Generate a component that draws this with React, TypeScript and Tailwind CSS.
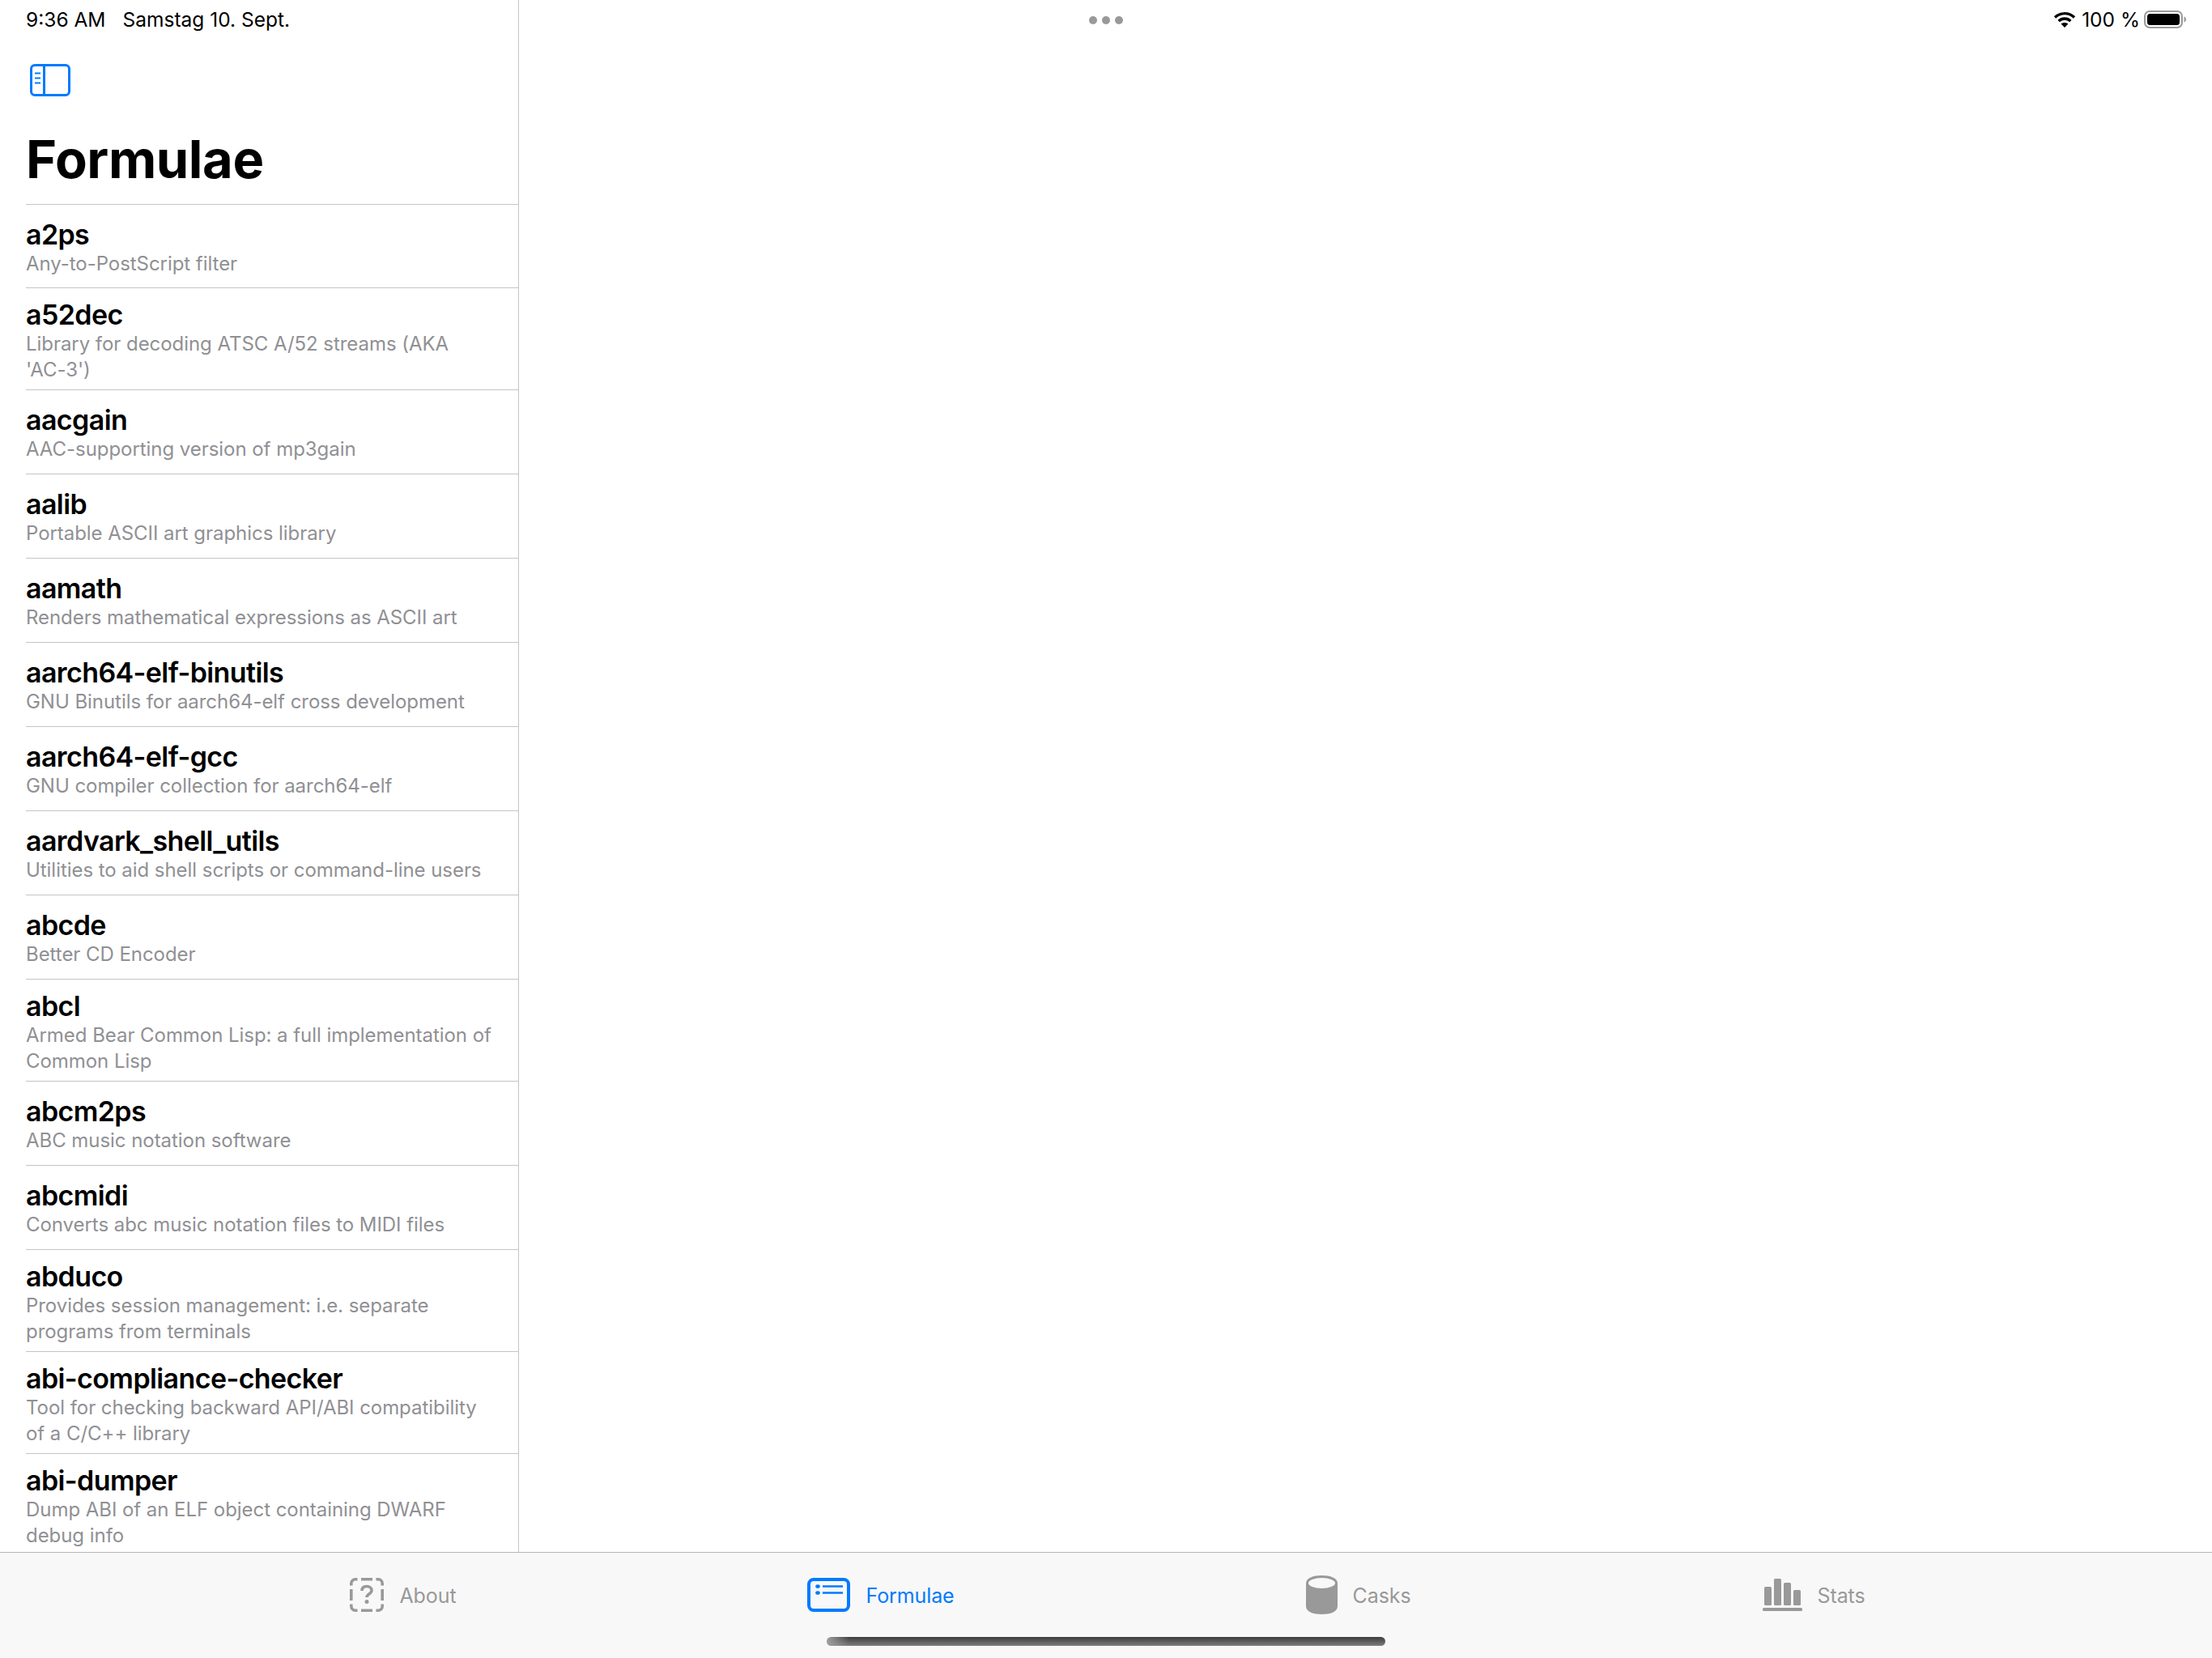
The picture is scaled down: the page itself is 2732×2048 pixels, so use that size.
const formulae = [
  { name: "a2ps", desc: ["Any-to-PostScript filter"] },
  { name: "a52dec", desc: ["Library for decoding ATSC A/52 streams (AKA", "'AC-3')"] },
  { name: "aacgain", desc: ["AAC-supporting version of mp3gain"] },
  { name: "aalib", desc: ["Portable ASCII art graphics library"] },
  { name: "aamath", desc: ["Renders mathematical expressions as ASCII art"] },
  { name: "aarch64-elf-binutils", desc: ["GNU Binutils for aarch64-elf cross development"] },
  { name: "aarch64-elf-gcc", desc: ["GNU compiler collection for aarch64-elf"] },
  { name: "aardvark_shell_utils", desc: ["Utilities to aid shell scripts or command-line users"] },
  { name: "abcde", desc: ["Better CD Encoder"] },
  { name: "abcl", desc: ["Armed Bear Common Lisp: a full implementation of", "Common Lisp"] },
  { name: "abcm2ps", desc: ["ABC music notation software"] },
  { name: "abcmidi", desc: ["Converts abc music notation files to MIDI files"] },
  { name: "abduco", desc: ["Provides session management: i.e. separate", "programs from terminals"] },
  { name: "abi-compliance-checker", desc: ["Tool for checking backward API/ABI compatibility", "of a C/C++ library"] },
  { name: "abi-dumper", desc: ["Dump ABI of an ELF object containing DWARF", "debug info"] },
];

function StatusBar() {
  return (
    <div className="absolute top-0 inset-x-0 h-[50px] px-8 grid grid-cols-3 items-center text-[24.5px] text-black">
      <div className="flex gap-[21px] -mt-[2px]">
        <span>9:36 AM</span>
        <span>Samstag 10. Sept.</span>
      </div>
      <div className="flex justify-center gap-[6px]">
        <div className="w-[10px] h-[10px] rounded-full bg-[#999999]" />
        <div className="w-[10px] h-[10px] rounded-full bg-[#999999]" />
        <div className="w-[10px] h-[10px] rounded-full bg-[#999999]" />
      </div>
      <div className="flex justify-end items-center gap-[7px] -mt-[2px]">
        <svg width="28" height="20" viewBox="0 0 28 20">
          <path d="M2 7.500C9 1 19 1 26 7.500" fill="none" stroke="black" strokeWidth="3.400" />
          <path d="M6.600 12C11 8 17 8 21.400 12" fill="none" stroke="black" strokeWidth="3.400" />
          <path d="M14 20l-4.400-4.600c2.600-2 6.200-2 8.800 0z" fill="black" />
        </svg>
        <span className="-mr-[2px]">100 %</span>
        <svg width="52" height="22" viewBox="0 0 52 22">
          <rect x="1" y="1" width="46" height="20" rx="6" fill="none" stroke="#9a9a9a" strokeWidth="2" />
          <rect x="4" y="4" width="40" height="14" rx="3.500" fill="black" />
          <path d="M49.500 7.500c1.800.6 2.500 2 2.500 3.500s-.7 2.900-2.500 3.500z" fill="#9a9a9a" />
        </svg>
      </div>
    </div>
  );
}

function SidebarIcon() {
  return (
    <svg width="50" height="40" viewBox="0 0 50 40" className="text-[#007aff]">
      <rect x="1.500" y="1.500" width="47" height="37" rx="4.500" fill="none" stroke="currentColor" strokeWidth="3" />
      <path d="M17.500 2v36" stroke="currentColor" strokeWidth="3" />
      <path d="M6 11.500h7M6 17.500h7M6 23.500h7" stroke="currentColor" strokeWidth="2" />
    </svg>
  );
}

function AboutIcon() {
  return (
    <svg width="42" height="42" viewBox="0 0 42 42" fill="none" stroke="#999999" strokeWidth="3.600">
      <path d="M1.800 9.500V7A5.200 5.200 0 0 1 7 1.800h2.500M14 1.800h14M32.500 1.800H35A5.200 5.200 0 0 1 40.200 7v2.500M40.200 14v14M40.200 32.500V35a5.200 5.200 0 0 1-5.200 5.200h-2.500M28 40.200H14M9.500 40.200H7A5.200 5.200 0 0 1 1.800 35v-2.500M1.800 28V14" />
      <path d="M15 16c0-4 2.600-5.500 6-5.500s6 1.900 6 5c0 4.500-6 4.500-6 8.500" />
      <circle cx="21" cy="29.500" r="2.500" fill="#999999" stroke="none" />
    </svg>
  );
}

function FormulaeIcon() {
  return (
    <svg width="53" height="42" viewBox="0 0 53 42" fill="none" stroke="#007aff">
      <rect x="2" y="2" width="49" height="38" rx="6" strokeWidth="4" />
      <path d="M19 10.500h25M19 18.500h25" strokeWidth="2.600" />
      <ellipse cx="13" cy="10.500" rx="2.800" ry="2.300" fill="#007aff" stroke="none" />
      <ellipse cx="13" cy="18.500" rx="2.800" ry="2.300" fill="#007aff" stroke="none" />
    </svg>
  );
}

function CasksIcon() {
  return (
    <svg width="39" height="48" viewBox="0 0 39 48">
      <path d="M0 10C0 3 9 0 19.500 0S39 3 39 10v28c0 7-9 10-19.500 10S0 45 0 38z" fill="#999999" />
      <ellipse cx="19.500" cy="9.500" rx="16.500" ry="6.500" fill="#f8f8f8" />
    </svg>
  );
}

function StatsIcon() {
  return (
    <svg width="49" height="40" viewBox="0 0 49 40" fill="#999999">
      <rect x="2" y="10" width="9" height="23" rx="1.500" />
      <rect x="14" y="0" width="9" height="33" rx="1.500" />
      <rect x="26" y="5" width="9" height="28" rx="1.500" />
      <rect x="38" y="14" width="9" height="19" rx="1.500" />
      <rect x="0" y="36" width="49" height="4" rx="1.500" />
    </svg>
  );
}

export default function App() {
  const tabs = [
    { label: "About", icon: <AboutIcon />, active: false },
    { label: "Formulae", icon: <FormulaeIcon />, active: true },
    { label: "Casks", icon: <CasksIcon />, active: false },
    { label: "Stats", icon: <StatsIcon />, active: false },
  ];

  return (
    <div className="relative w-[2732px] h-[2048px] flex flex-col overflow-hidden bg-white font-['Inter',sans-serif]">
      <div className="flex-1 min-h-0 flex">
        {/* Sidebar */}
        <div className="w-[641px] border-r border-[#c4c4c6] flex flex-col overflow-hidden">
          <div className="h-[252px] shrink-0 pt-[79px] pl-[37px] flex flex-col">
            <SidebarIcon />
            <h1 className="mt-[39px] -ml-[5px] text-[65px] leading-[78px] font-bold tracking-[-0.4px] text-black">
              Formulae
            </h1>
          </div>
          <div className="ml-8 border-t border-[#c4c4c6]">
            {formulae.map((f) => (
              <div
                key={f.name}
                className={
                  f.desc.length > 1
                    ? "h-[126px] pt-[13px] border-b border-[#c4c4c6] last:border-b-0"
                    : "h-[104px] first:h-[103px] pt-[17px] border-b border-[#c4c4c6]"
                }
              >
                <div className="text-[34px] leading-[40px] font-semibold tracking-[-0.6px] text-black">{f.name}</div>
                {f.desc.map((line) => (
                  <div key={line} className="text-[24px] leading-[32px] tracking-[-0.05px] text-[#909094]">
                    {line}
                  </div>
                ))}
              </div>
            ))}
          </div>
        </div>
        {/* Detail pane stays empty */}
        <div className="flex-1 bg-white" />
      </div>

      {/* Tab bar */}
      <div className="h-[131px] shrink-0 border-t border-[#b5b5b5] bg-[#f8f8f8] flex justify-center gap-[434px] pt-[31px] pl-[4px]">
        {tabs.map((t) => (
          <div key={t.label} className="h-[42px] flex items-center gap-[19px]">
            {t.icon}
            <span
              className={
                t.active
                  ? "mt-[4px] text-[25px] tracking-[-0.1px] text-[#007aff]"
                  : "mt-[4px] text-[25px] tracking-[-0.1px] text-[#999999]"
              }
            >
              {t.label}
            </span>
          </div>
        ))}
      </div>

      <StatusBar />

      {/* Home indicator */}
      <div className="absolute bottom-[15px] left-[1021px] w-[690px] h-[11px] rounded-full bg-[linear-gradient(90deg,#a0a0a0_0,transparent_28px),linear-gradient(180deg,#3d3d3d,#7d7d7d)]" />
    </div>
  );
}
